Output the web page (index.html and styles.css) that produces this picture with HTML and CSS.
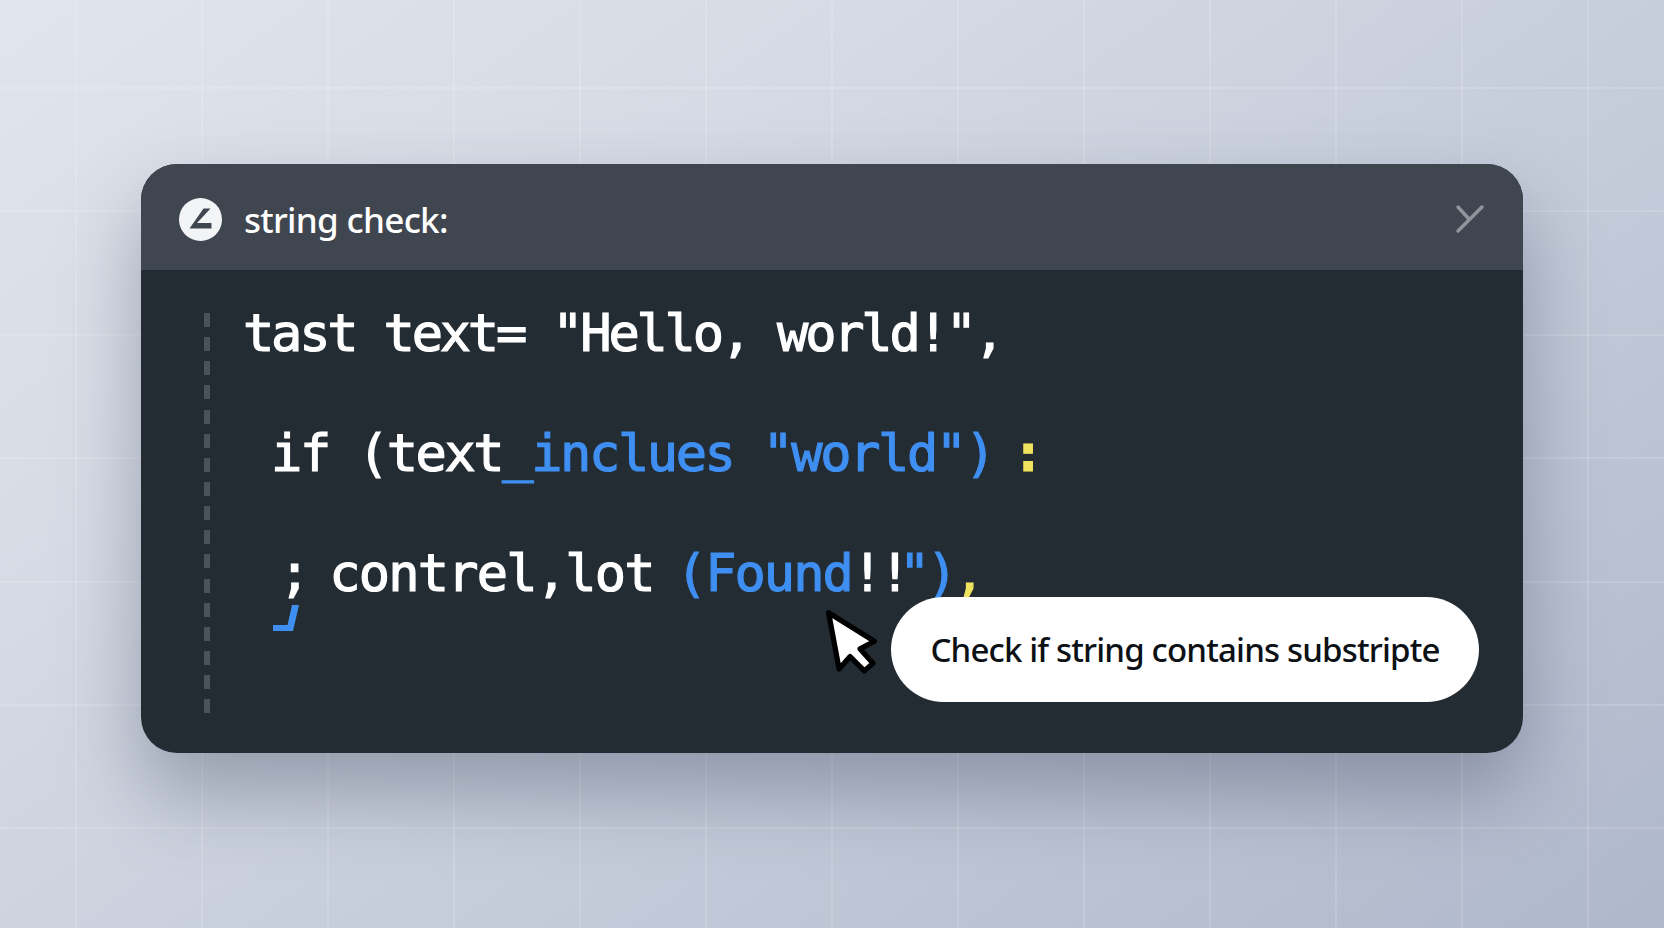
FILE: index.html
```html
<!DOCTYPE html>
<html lang="en">
<head>
<meta charset="utf-8">
<title>string check</title>
<link rel="stylesheet" href="styles.css">
</head>
<body>
<main class="stage">
  <section class="card">
    <header class="bar">
      <div class="title">
        <svg class="logo" viewBox="0 0 43 43" aria-hidden="true">
          <circle cx="21.5" cy="21.5" r="21.5" fill="#f3f4f5"/>
          <path d="M24.5 10.5h7L18 25h14.500v5.500H10.500z" fill="#3f4650"/>
        </svg>
        <span>string check:</span>
      </div>
      <svg class="close" viewBox="0 0 30 30" aria-hidden="true">
        <path d="M3 27 27 3M3 3 13.500 14.500" fill="none" stroke="#8f959d" stroke-width="3.500" stroke-linecap="round"/>
      </svg>
    </header>
    <div class="body">
      <div class="guide"></div>
      <pre class="code"><code class="line first">tast text= "Hello, world!",</code><code class="line second">if (text<span class="blue">_inclues "world")</span><span class="colon-gap"> </span><span class="yellow colon">:</span></code><code class="line third">; <span class="wide">contrel,lot</span> <span class="tight"><span class="blue found">(Found</span>!<span class="bang">!</span><span class="blue">")</span><span class="yellow">,</span></span></code></pre>
    </div>
    <svg class="mark" viewBox="0 0 26 26" aria-hidden="true">
      <path d="M19 0h7l-6 26H0v-6h14.500z" fill="#3f8ff0"/>
    </svg>
    <div class="tip">Check if string contains substripte</div>
    <svg class="pointer" viewBox="0 0 66 76" aria-hidden="true">
      <path d="M9 7 57 37 42 45 55.500 60 46.500 68 31.500 53 20 66z" fill="#fff" stroke="#000" stroke-width="5.500" stroke-linejoin="round"/>
    </svg>
  </section>
</main>
</body>
</html>
```
FILE: styles.css
```css
* { box-sizing: border-box; }
html, body { height: 100%; margin: 0; }
body {
  overflow: hidden;
  background-color: #c3cad8;
  background-image:
    repeating-linear-gradient(90deg, transparent 0 75px, rgba(255,255,255,.14) 75px 77px, transparent 77px 126px),
    repeating-linear-gradient(180deg, transparent 0 87px, rgba(255,255,255,.14) 87px 89px, transparent 89px 123.400px),
    linear-gradient(145deg, #e1e5ec 0%, #d5dae4 30%, #c2c9d8 65%, #afb7cb 100%);
}
.stage {
  height: 100%;
  display: flex;
  justify-content: center;
  align-items: flex-start;
  padding-top: 164px;
  filter: drop-shadow(0 40px 40px rgba(65,72,95,.4));
}
.card {
  position: relative;
  width: 1382px;
  height: 589px;
  border-radius: 36px;
  overflow: hidden;
  display: flex;
  flex-direction: column;
  background: #232b33;
}
.bar {
  height: 106px;
  flex: none;
  display: flex;
  align-items: center;
  justify-content: space-between;
  padding: 4px 38px 0 38px;
  background: #3f4650;
}
.title {
  display: flex;
  align-items: center;
  gap: 22px;
  color: #fff;
  font: 500 35px/1 "Noto Sans", sans-serif;
  letter-spacing: -.7px;
}
.logo { width: 43px; height: 43px; flex: none; }
.close { width: 30px; height: 30px; flex: none; }
.body {
  flex: 1;
  display: flex;
  padding: 43px 0 40px 63px;
}
.guide {
  width: 6px;
  flex: none;
  background: repeating-linear-gradient(180deg, #4a525c 0 14px, transparent 14px 24.150px);
}
.code {
  margin: -40px 0 0 33px;
  display: flex;
  flex-direction: column;
  color: #fff;
  font: 52px/120px "DejaVu Sans Mono", monospace;
  -webkit-text-stroke: 1.200px currentColor;
}
.line { display: block; font: inherit; white-space: pre; }
.first { letter-spacing: -3.200px; }
.second { padding-left: 28px; letter-spacing: -2.400px; }
.third { padding-left: 36px; letter-spacing: -3.400px; word-spacing: -5.700px; }
.wide { letter-spacing: -1.800px; }
.tight { letter-spacing: -3.900px; }
.found { letter-spacing: -2px; }
.bang { letter-spacing: -11.500px; }
.colon-gap { letter-spacing: -12.400px; }
.blue { color: #3f8ff2; }
.yellow { color: #f0e35f; }
.colon { font-weight: 700; }
.mark { position: absolute; left: 132px; top: 441px; width: 26px; height: 26px; }
.pointer { position: absolute; left: 679px; top: 442px; width: 63px; height: 72.500px; }
.tip {
  position: absolute;
  left: 750px;
  top: 433px;
  width: 588px;
  height: 105px;
  border-radius: 53px;
  background: #fff;
  color: #0c1116;
  display: flex;
  align-items: center;
  justify-content: center;
  font: 500 33px/1 "Noto Sans", sans-serif;
  letter-spacing: -.82px;
}
```
